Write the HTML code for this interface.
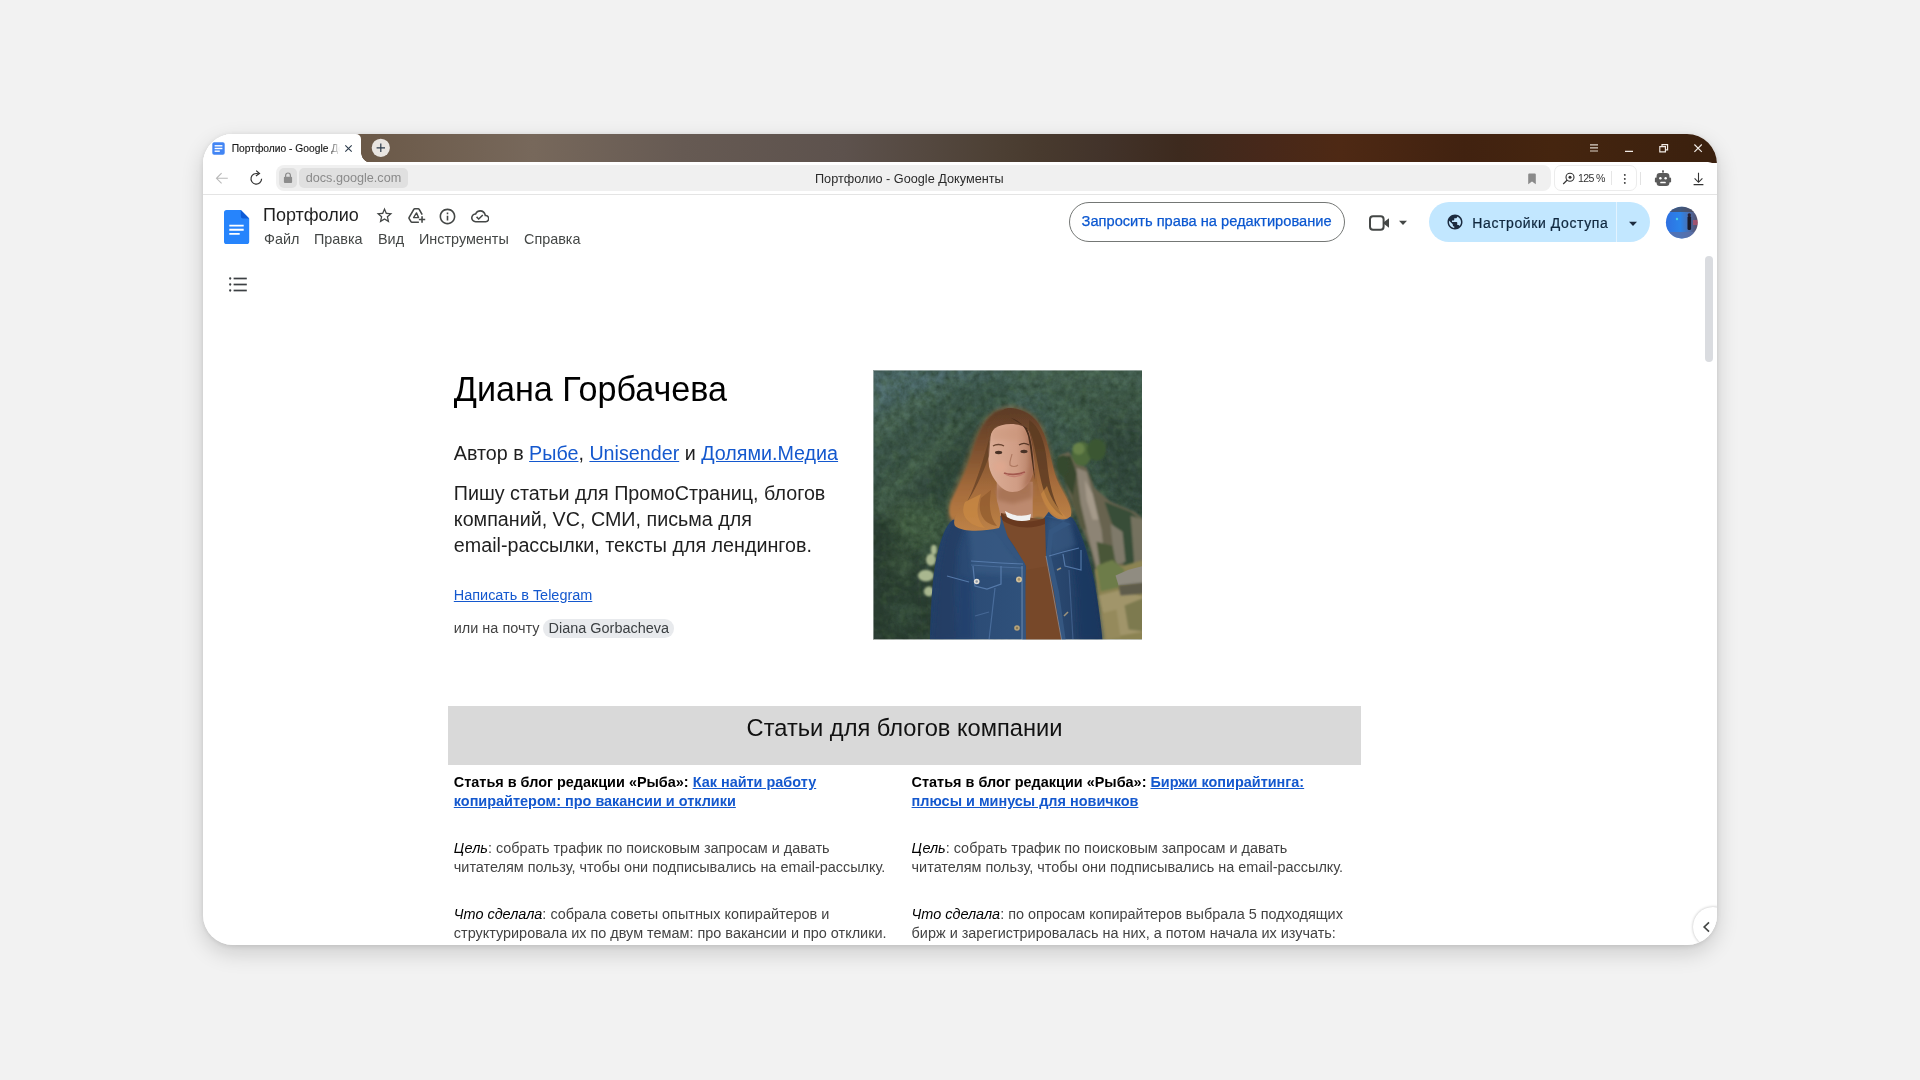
<!DOCTYPE html>
<html lang="ru">
<head>
<meta charset="utf-8">
<title>Портфолио - Google Документы</title>
<style>
*{box-sizing:border-box;margin:0;padding:0}
html,body{width:1920px;height:1080px;overflow:hidden;background:#f2f2f2;font-family:"Liberation Sans",sans-serif;color:#000}
#win{will-change:transform;position:absolute;left:203px;top:134px;width:1514px;height:811px;border-radius:30px;background:#fff;overflow:hidden}
#shadow{position:absolute;left:203px;top:134px;width:1514px;height:811px;border-radius:30px;box-shadow:0 8px 22px rgba(0,0,0,.16),0 1px 5px rgba(0,0,0,.10)}
.abs{position:absolute;white-space:nowrap}
/* tab bar */
#tabbar{position:absolute;left:0;top:0;width:1514px;height:29px;background:linear-gradient(90deg,#fff 0,#fff 120px,#6b5948 120px,#6b5948 0px,#6b5948 160px,#77685b 330px,#665a53 480px,#5d524d 640px,#4c3f33 800px,#483a2e 837px,#42332a 900px,#3d2a1e 977px,#47281a 1060px,#4e2914 1138px,#412210 1262px,#45250f 1351px,#3a200e 1514px)}
#tab{position:absolute;left:0;top:0;width:158.300px;height:29px;background:#fff;border-radius:0 5px 0 0}
#tabcurve{position:absolute;left:158px;top:19px;width:10px;height:10px;background:radial-gradient(circle at 100% 0,rgba(255,255,255,0) 9.5px,#fff 10px)}
#toolbar{position:absolute;left:0;top:28px;width:1514px;height:32px;background:#fff;border-radius:0 9px 0 0}
#tbline{position:absolute;left:0;top:60px;width:1514px;height:1px;background:#e4e4e4}
#addr{position:absolute;left:73px;top:31px;width:1275px;height:26px;background:#f0f0f0;border-radius:8px}
#lock{position:absolute;left:76px;top:34px;width:18px;height:20px;background:#e0e0e0;border-radius:5px}
#url{position:absolute;left:96px;top:34px;width:109px;height:20px;background:#e0e0e0;border-radius:5px}
#zoompill{position:absolute;left:1351px;top:31px;width:83px;height:26px;background:#fff;border:1px solid #ececec;border-radius:7px}
/* docs */
.menu{font-size:14.4px;color:#444746;top:97px}
a,.lnk{color:#1458ce;text-decoration:underline}
.doc11{font-size:14.45px;line-height:19px;color:#434343}
</style>
</head>
<body>
<div id="shadow"></div>
<div id="win">
  <!-- browser chrome -->
  <div id="tabbar"></div>
  <div id="toolbar"></div>
  <div id="tab"></div>
  <div id="tabcurve"></div>
  <div id="tbline"></div>
  <div id="addr"></div>
  <div id="lock"></div>
  <div id="url"></div>
  <div id="zoompill"></div>
  <div class="abs" style="left:28.700px;top:8.600px;font-size:10.250px;color:#1a1a1a;width:108.500px;overflow:hidden;-webkit-mask-image:linear-gradient(90deg,#000 0,#000 96px,rgba(0,0,0,0) 108px);-webkit-text-stroke:0.150px #1a1a1a">Портфолио - Google Документы</div>
  <div class="abs" style="left:102.700px;top:36.800px;font-size:12.650px;color:#8a8a8a">docs.google.com</div>
  <div class="abs" style="left:612px;top:37.800px;font-size:12.700px;color:#2a2a2a">Портфолио - Google Документы</div>
  <div class="abs" style="left:1375px;top:37.600px;font-size:10.600px;letter-spacing:-0.650px;color:#333">125 %</div>

  <!-- docs header -->
  <div class="abs" style="left:60px;top:71px;font-size:18px;color:#1f1f1f">Портфолио</div>
  <div class="abs menu" style="left:61px">Файл</div>
  <div class="abs menu" style="left:111px">Правка</div>
  <div class="abs menu" style="left:175px">Вид</div>
  <div class="abs menu" style="left:216px">Инструменты</div>
  <div class="abs menu" style="left:321px">Справка</div>

  <div class="abs" style="left:866px;top:68px;width:276px;height:40px;border:1px solid #747775;border-radius:20px"></div>
  <div class="abs" style="left:878.600px;top:79.300px;font-size:14.650px;color:#0b57d0;-webkit-text-stroke:0.250px #0b57d0">Запросить права на редактирование</div>
  <div class="abs" style="left:1226px;top:68px;width:221px;height:40px;border-radius:20px;background:#c2e7ff"></div>
  <div class="abs" style="left:1413px;top:68px;width:1px;height:40px;background:#e3f3ff"></div>
  <div class="abs" style="left:1269.300px;top:80.500px;font-size:14px;color:#10283f;letter-spacing:0.600px;-webkit-text-stroke:0.220px #10283f">Настройки Доступа</div>

  <!-- document -->
  <div class="abs" style="left:250.800px;top:236px;font-size:34.150px;color:#000">Диана Горбачева</div>
  <div class="abs" style="left:250.800px;top:308.300px;font-size:19.720px;color:#1f1f1f">Автор в <span class="lnk">Рыбе</span>, <span class="lnk">Unisender</span> и <span class="lnk">Долями.Медиа</span></div>
  <div class="abs" style="left:250.800px;top:345.500px;font-size:19.720px;line-height:26.100px;color:#1f1f1f">Пишу статьи для ПромоСтраниц, блогов<br>компаний, VC, СМИ, письма для<br>email-рассылки, тексты для лендингов.</div>
  <div class="abs" style="left:250.800px;top:453px;font-size:14.450px"><span class="lnk">Написать в Telegram</span></div>
  <div class="abs" style="left:250.800px;top:486.200px;font-size:14.450px;color:#434343">или на почту</div>
  <div class="abs" style="left:340.300px;top:485.300px;width:130.500px;height:18.400px;border-radius:9.200px;background:#e8eaed"></div>
  <div class="abs" style="left:345.600px;top:486.200px;font-size:14.450px;color:#3c4043">Diana Gorbacheva</div>

  <div class="abs" style="left:244.500px;top:571.800px;width:913.500px;height:58.900px;background:#d9d9d9"></div>
  <div class="abs" style="left:543.600px;top:581px;font-size:23.670px;color:#111">Статьи для блогов компании</div>

  <div class="abs doc11" style="left:250.800px;top:639px"><b style="color:#000">Статья в блог редакции «Рыба»: <span class="lnk">Как найти работу</span><br><span class="lnk">копирайтером: про вакансии и отклики</span></b></div>
  <div class="abs doc11" style="left:250.800px;top:705px"><i style="color:#000">Цель</i>: собрать трафик по поисковым запросам и давать<br>читателям пользу, чтобы они подписывались на email-рассылку.</div>
  <div class="abs doc11" style="left:250.800px;top:771px"><i style="color:#000">Что сделала</i>: собрала советы опытных копирайтеров и<br>структурировала их по двум темам: про вакансии и про отклики.</div>

  <div class="abs doc11" style="left:708.600px;top:639px"><b style="color:#000">Статья в блог редакции «Рыба»: <span class="lnk">Биржи копирайтинга:</span><br><span class="lnk">плюсы и минусы для новичков</span></b></div>
  <div class="abs doc11" style="left:708.600px;top:705px"><i style="color:#000">Цель</i>: собрать трафик по поисковым запросам и давать<br>читателям пользу, чтобы они подписывались на email-рассылку.</div>
  <div class="abs doc11" style="left:708.600px;top:771px"><i style="color:#000">Что сделала</i>: по опросам копирайтеров выбрала 5 подходящих<br>бирж и зарегистрировалась на них, а потом начала их изучать:</div>


  <!-- tab favicon -->
  <svg class="abs" style="left:8.5px;top:8px" width="13" height="13" viewBox="0 0 13 13"><rect x="0.3" y="0.3" width="12.4" height="12.4" rx="1.8" fill="#4285f4"/><rect x="2.6" y="3.1" width="7.8" height="1.4" fill="#fff"/><rect x="2.6" y="5.8" width="7.8" height="1.4" fill="#fff"/><rect x="2.6" y="8.5" width="5.2" height="1.4" fill="#fff"/></svg>
  <!-- tab close -->
  <svg class="abs" style="left:141px;top:10px" width="9" height="9" viewBox="0 0 9 9"><path d="M1.3 1.3 7.7 7.7M7.7 1.3 1.3 7.7" stroke="#2b3a4a" stroke-width="1.1" fill="none"/></svg>
  <!-- new tab -->
  <svg class="abs" style="left:168px;top:4px" width="20" height="20" viewBox="0 0 20 20"><circle cx="9.8" cy="9.8" r="9.1" fill="#e9e5e1"/><path d="M9.8 5.6v8.4M5.6 9.8h8.4" stroke="#2b3a4a" stroke-width="1.2" fill="none"/></svg>
  <!-- window controls -->
  <svg class="abs" style="left:1380px;top:6px" width="130" height="16" viewBox="0 0 130 16"><g stroke="#f1ebe6" stroke-width="1.150" fill="none"><path d="M7 4.800h8M7 7.900h8M7 11h8" stroke="#ddd3ca"/><path d="M42 11.4h8"/><path d="M76.8 6.6h5.6v5.2h-5.6zM79 6.4V4.6h5.6v5.2h-2"/><path d="M111.4 4.5l7.4 7.4M118.8 4.5l-7.4 7.4"/></g></svg>
  <!-- back -->
  <svg class="abs" style="left:12px;top:37px" width="14" height="14" viewBox="0 0 14 14"><path d="M12.8 7.3H1.6M6.6 2.2 1.5 7.3l5.1 5.1" stroke="#b9b9b9" stroke-width="1.1" fill="none"/></svg>
  <!-- reload -->
  <svg class="abs" style="left:45px;top:35px" width="17" height="18" viewBox="0 0 17 18"><path d="M13.6 9.8a5.3 5.3 0 1 1-3.3-4.9" stroke="#333" stroke-width="1.2" fill="none"/><path d="M8.2 1.6l3.3 2.9-3.6 2.4" stroke="#333" stroke-width="1.2" fill="none"/></svg>
  <!-- lock -->
  <svg class="abs" style="left:80px;top:38px" width="10" height="12" viewBox="0 0 10 12"><path d="M2.6 5V3.4a2.4 2.4 0 0 1 4.8 0V5" stroke="#8c8c8c" stroke-width="1.2" fill="none"/><rect x="0.9" y="4.8" width="8.2" height="6.2" rx="1" fill="#8c8c8c"/></svg>
  <!-- bookmark -->
  <svg class="abs" style="left:1324px;top:38.5px" width="10" height="12" viewBox="0 0 10 12"><path d="M1.2 1.6a1 1 0 0 1 1-1h5.6a1 1 0 0 1 1 1v9.6L5 8.6l-3.8 2.6z" fill="#8a8a8a"/></svg>
  <!-- zoom magnifier -->
  <svg class="abs" style="left:1359px;top:38px" width="14" height="13" viewBox="0 0 14 13"><circle cx="8" cy="5.2" r="4" stroke="#333" stroke-width="1.1" fill="none"/><path d="M5 8.3 1.2 12" stroke="#333" stroke-width="1.2"/><circle cx="8" cy="5.2" r="1.5" fill="#333"/></svg>
  <div class="abs" style="left:1408px;top:37px;width:1px;height:14px;background:#e6e6e6"></div>
  <svg class="abs" style="left:1419px;top:39px" width="6" height="12" viewBox="0 0 6 12"><circle cx="2.8" cy="1.9" r="0.95" fill="#333"/><circle cx="2.8" cy="5.9" r="0.95" fill="#333"/><circle cx="2.8" cy="9.9" r="0.95" fill="#333"/></svg>
  <div class="abs" style="left:1437px;top:38px;width:1px;height:13px;background:#e2e2e2"></div>
  <!-- robot -->
  <svg class="abs" style="left:1451px;top:36px" width="18" height="17" viewBox="0 0 18 17"><path d="M9 0.6v2.6" stroke="#5a5a5a" stroke-width="1.1"/><circle cx="9" cy="1.2" r="0.9" fill="#5a5a5a"/><rect x="2.6" y="3" width="12.8" height="13" rx="3.2" fill="#5a5a5a"/><rect x="0.9" y="7.6" width="2.6" height="4.8" rx="1.2" fill="#5a5a5a"/><rect x="14.5" y="7.6" width="2.6" height="4.8" rx="1.2" fill="#5a5a5a"/><circle cx="6.4" cy="8.3" r="1.25" fill="#fff"/><circle cx="11.6" cy="8.3" r="1.25" fill="#fff"/><rect x="6.2" y="11.8" width="5.6" height="1.5" rx="0.6" fill="#fff"/></svg>
  <!-- download -->
  <svg class="abs" style="left:1489px;top:38px" width="13" height="14" viewBox="0 0 13 14"><path d="M6.5 0.8v9.4M2.6 6.4l3.9 3.9 3.9-3.9M1.6 12.6h9.8" stroke="#333" stroke-width="1.1" fill="none"/></svg>

  <!-- docs icon -->
  <svg class="abs" style="left:20px;top:75px" width="27" height="36" viewBox="0 0 27 36"><path d="M3.6 1h14.2l8.4 8.4v23a2.6 2.6 0 0 1-2.6 2.6H3.6A2.6 2.6 0 0 1 1 32.400V3.600A2.600 2.600 0 0 1 3.600 1z" fill="#2684fc"/><path d="M17.800 1l8.400 8.400h-6.200a2.200 2.200 0 0 1-2.200-2.200z" fill="#0d5bd7"/><path d="M6.300 15.700h14.400v1.900H6.300zM6.300 19.800h14.400v1.900H6.300zM6.300 23.900h10.400v1.900H6.300z" fill="#fff"/></svg>
  <!-- star -->
  <svg class="abs" style="left:172.200px;top:71.600px" width="19" height="19" viewBox="0 0 24 24"><path fill="#444746" d="M22 9.240l-7.190-.62L12 2 9.190 8.630 2 9.240l5.460 4.730L5.820 21 12 17.270 18.180 21l-1.630-7.030L22 9.240zM12 15.400l-3.760 2.270 1-4.280-3.320-2.880 4.380-.38L12 6.100l1.710 4.040 4.380.38-3.320 2.880 1 4.280L12 15.400z"/></svg>
  <!-- drive add -->
  <svg class="abs" style="left:204px;top:72.300px" width="19" height="19" viewBox="0 0 24 24"><g fill="none" stroke="#444746" stroke-width="2" stroke-linejoin="round"><path d="M15 20.500H6.300a1.500 1.500 0 0 1-1.300-.75L2.700 15.900a1.500 1.500 0 0 1 0-1.500L8.600 4.250a1.500 1.500 0 0 1 1.300-.75h4.200a1.500 1.500 0 0 1 1.300.75L19.200 10.800"/><path d="M12 8.700 8.300 14.700H14.600z" stroke-width="1.700"/><path d="M19 13v8M15 17h8" stroke-linejoin="miter"/></g></svg>
  <!-- info -->
  <svg class="abs" style="left:235.400px;top:72.800px" width="19" height="19" viewBox="0 0 24 24"><path fill="#444746" d="M11 7h2v2h-2zm0 4h2v6h-2zm1-9C6.480 2 2 6.480 2 12s4.480 10 10 10 10-4.480 10-10S17.520 2 12 2zm0 18c-4.410 0-8-3.590-8-8s3.590-8 8-8 8 3.590 8 8-3.590 8-8 8z"/></svg>
  <!-- cloud done -->
  <svg class="abs" style="left:267.500px;top:72.800px" width="18.500" height="18.500" viewBox="0 0 24 24"><path fill="#444746" d="M19.350 10.040C18.670 6.590 15.640 4 12 4 9.110 4 6.600 5.640 5.350 8.040 2.340 8.360 0 10.910 0 14c0 3.310 2.690 6 6 6h13c2.760 0 5-2.240 5-5 0-2.640-2.050-4.780-4.650-4.960zM19 18H6c-2.210 0-4-1.790-4-4 0-2.050 1.530-3.760 3.560-3.970l1.070-.11.500-.95C8.080 7.140 9.940 6 12 6c2.620 0 4.880 1.860 5.390 4.430l.3 1.500 1.530.11c1.560.1 2.780 1.410 2.780 2.960 0 1.650-1.350 3-3 3zm-9-3.820l-2.090-2.090L6.500 13.500 10 17l6.010-6.010-1.410-1.410z"/></svg>
  <!-- outline list -->
  <svg class="abs" style="left:25px;top:142px" width="20" height="17" viewBox="0 0 20 17"><g fill="#3c4043"><circle cx="2.200" cy="2.500" r="1.150"/><circle cx="2.200" cy="8.500" r="1.150"/><circle cx="2.200" cy="14.500" r="1.150"/><rect x="5.600" y="1.650" width="13.200" height="1.700"/><rect x="5.600" y="7.650" width="13.200" height="1.700"/><rect x="5.600" y="13.650" width="13.200" height="1.700"/></g></svg>
  <!-- camera -->
  <svg class="abs" style="left:1165px;top:80px" width="23" height="18" viewBox="0 0 23 18"><rect x="2" y="2.300" width="13.600" height="13.400" rx="3" stroke="#444746" stroke-width="2" fill="none"/><path d="M15.400 8.600l5.600-4.400v9.600l-5.600-4.400z" fill="#444746"/></svg>
  <svg class="abs" style="left:1195px;top:86px" width="10" height="6" viewBox="0 0 10 6"><path d="M1 0.800h8L5 5z" fill="#444746"/></svg>
  <!-- globe -->
  <svg class="abs" style="left:1243.300px;top:79px" width="18" height="18" viewBox="0 0 24 24"><path fill="#1c2b3f" d="M12 2C6.480 2 2 6.480 2 12s4.480 10 10 10 10-4.480 10-10S17.520 2 12 2zm-1 17.930c-3.950-.49-7-3.850-7-7.930 0-.62.080-1.210.21-1.790L9 15v1c0 1.100.9 2 2 2v1.930zm6.900-2.540c-.26-.81-1-1.390-1.900-1.390h-1v-3c0-.55-.45-1-1-1H8v-2h2c.55 0 1-.45 1-1V7h2c1.100 0 2-.9 2-2v-.41c2.930 1.190 5 4.060 5 7.410 0 2.080-.8 3.970-2.100 5.390z"/></svg>
  <svg class="abs" style="left:1425px;top:86.500px" width="10" height="6" viewBox="0 0 10 6"><path d="M1 0.800h8L5 5z" fill="#1c2b3f"/></svg>
  <!-- avatar -->
  <svg class="abs" style="left:1462px;top:72px" width="34" height="34" viewBox="0 0 34 34"><defs><linearGradient id="avg" x1="0" y1="0" x2="1" y2="0"><stop offset="0" stop-color="#2f6fe0"/><stop offset="0.450" stop-color="#2b84ea"/><stop offset="0.700" stop-color="#4a6fb0"/><stop offset="1" stop-color="#5a4a5a"/></linearGradient><clipPath id="avc"><circle cx="16.800" cy="16.600" r="15.900"/></clipPath></defs><g clip-path="url(#avc)"><rect width="34" height="34" fill="url(#avg)"/><rect x="0" y="0" width="34" height="6" fill="#4a4650" opacity=".7"/><rect x="0" y="26" width="34" height="8" fill="#5a6fa8" opacity=".8"/><rect x="22.500" y="10" width="3.600" height="14" rx="1.500" fill="#1a1a2a"/><circle cx="24.300" cy="9" r="1.700" fill="#2a2030"/><rect x="28" y="14" width="6" height="5" fill="#c0506a" opacity=".7"/><circle cx="12" cy="13" r="1.200" fill="#4ad0e0"/></g></svg>
  <!-- scrollbar -->
  <div class="abs" style="left:1502px;top:122px;width:8px;height:106px;border-radius:4px;background:#dadce0"></div>
  <!-- side panel toggle -->
  <div class="abs" style="left:1490px;top:773px;width:40px;height:40px;border-radius:20px;background:#fff;box-shadow:0 0 3px rgba(0,0,0,.28)"></div>
  <svg class="abs" style="left:1499px;top:787px" width="9" height="12" viewBox="0 0 9 12"><path d="M7 1.400 2.200 6 7 10.600" stroke="#444746" stroke-width="1.700" fill="none"/></svg>

  <!-- photo placeholder -->
<svg id="photo" class="abs" style="left:669.500px;top:236.300px" width="269.500" height="269.500" viewBox="0 0 270 270" preserveAspectRatio="none">
<defs>
<linearGradient id="pbg" x1="0" y1="0" x2="0" y2="1"><stop offset="0" stop-color="#4a6964"/><stop offset="0.300" stop-color="#3b5848"/><stop offset="0.650" stop-color="#334d3b"/><stop offset="1" stop-color="#27382b"/></linearGradient>
<linearGradient id="phair" x1="0" y1="0" x2="0" y2="1"><stop offset="0" stop-color="#5c3b26"/><stop offset="0.300" stop-color="#7a4e2e"/><stop offset="0.650" stop-color="#a46b3b"/><stop offset="1" stop-color="#bd8146"/></linearGradient>
<linearGradient id="pjack" x1="0" y1="0" x2="1" y2="0"><stop offset="0" stop-color="#233f66"/><stop offset="0.250" stop-color="#2c4c76"/><stop offset="0.550" stop-color="#2f517b"/><stop offset="0.800" stop-color="#27446b"/><stop offset="1" stop-color="#1c3457"/></linearGradient>
<linearGradient id="pface" x1="0" y1="0" x2="1" y2="0"><stop offset="0" stop-color="#dcae97"/><stop offset="0.600" stop-color="#d09d85"/><stop offset="1" stop-color="#b27c62"/></linearGradient>
<filter id="b8" x="-20%" y="-20%" width="140%" height="140%"><feGaussianBlur stdDeviation="8"/></filter>
<filter id="b4" x="-20%" y="-20%" width="140%" height="140%"><feGaussianBlur stdDeviation="4"/></filter>
<filter id="b2" x="-20%" y="-20%" width="140%" height="140%"><feGaussianBlur stdDeviation="2"/></filter>
<filter id="b1" x="-20%" y="-20%" width="140%" height="140%"><feGaussianBlur stdDeviation="1"/></filter>
<filter id="b05" x="-20%" y="-20%" width="140%" height="140%"><feGaussianBlur stdDeviation="0.600"/></filter>
<filter id="tex" x="0" y="0" width="100%" height="100%" color-interpolation-filters="sRGB"><feTurbulence type="fractalNoise" baseFrequency="0.140" numOctaves="3" seed="7" result="n"/><feColorMatrix in="n" type="matrix" values="0 0 0 0 0.120  0 0 0 0 0.200  0 0 0 0 0.130  0.900 0.900 0.300 0 -0.750"/></filter>
<filter id="tex2" x="0" y="0" width="100%" height="100%" color-interpolation-filters="sRGB"><feTurbulence type="fractalNoise" baseFrequency="0.110" numOctaves="3" seed="3" result="n"/><feColorMatrix in="n" type="matrix" values="0 0 0 0 0.400  0 0 0 0 0.540  0 0 0 0 0.360  0.300 0.900 0.900 0 -0.950"/></filter>
<clipPath id="pclip"><rect x="0" y="0" width="270" height="270"/></clipPath>
</defs>
<g clip-path="url(#pclip)">
<rect width="270" height="270" fill="url(#pbg)"/>
<!-- forest masses -->
<g filter="url(#b8)">
<path d="M-10-10H150L70 14 0 50-10 56z" fill="#557679"/>
<path d="M130-10H280V22L200 16 140 22z" fill="#4b6b58"/>
<path d="M-10 52 40 24 120 8 150 24 100 56 50 92 0 128-10 130z" fill="#3a5949"/>
<path d="M-10 132 20 104 60 76 100 50 128 60 100 110 78 150 40 172-10 182z" fill="#30493a"/>
<path d="M150 14H280V64L230 54 190 34z" fill="#3f5d49"/>
<path d="M215 44 280 54V150L250 135 225 100z" fill="#2e4537"/>
<path d="M-10 140 30 150 55 190 60 280H-10z" fill="#243427"/>
<path d="M20 135 75 135 70 175 40 178 22 160z" fill="#45633f"/>
<path d="M160 26 215 30 225 62 195 78 170 62z" fill="#39564200"/>
</g>
<g filter="url(#b4)" opacity="0.700">
<path d="M0 52 36 30 92 8 60 32 20 60 0 74z" fill="#5a7a66"/>
<path d="M0 126 30 98 66 66 100 40 84 66 52 100 24 130 0 150z" fill="#4f7052"/>
<path d="M60 110 84 80 96 84 76 120 66 146z" fill="#27402f"/>
<path d="M170 30 210 40 230 70 214 66 190 50z" fill="#4a6a4e"/>
<path d="M10 190 30 176 44 196 30 214z" fill="#3c573a"/>
<path d="M14 236 36 226 46 250 24 262z" fill="#34503a"/>
</g>
<rect width="270" height="270" fill="#52646a" opacity="0.220"/>
<rect width="270" height="270" filter="url(#tex)" opacity="0.700"/>
<rect width="270" height="270" filter="url(#tex2)" opacity="0.400"/>
<!-- rock -->
<g filter="url(#b1)">
<path d="M186 86 196 82 205 92 214 98 222 118 238 132 262 142 272 150V206H224L218 180 210 160 202 140 194 118 188 100z" fill="#67644f"/>
<path d="M204 98 214 102 221 128 229 160 233 198 224 198 214 160 206 130z" fill="#8d8475"/>
<path d="M212 110 220 124 226 150 220 150 214 130z" fill="#a59a8a"/>
<path d="M196 100 204 104 208 134 214 160 208 158 200 134z" fill="#56583f"/>
<path d="M232 132 258 142 270 152V196L252 200 246 170 238 150z" fill="#394d38"/>
<path d="M238 154 250 162 253 192 242 196z" fill="#7f7a6a"/>
<path d="M184 88 198 86 204 104 200 126 192 112z" fill="#37472f"/>
<path d="M258 146 272 150V200L262 198z" fill="#74725f"/>
<path d="M224 172 240 176 244 198 228 200z" fill="#4a5638"/>
</g>
<!-- tree on rock -->
<g filter="url(#b1)">
<ellipse cx="209" cy="84" rx="10" ry="12" fill="#4d693b"/>
<ellipse cx="224" cy="80" rx="9.500" ry="11" fill="#3b5632"/>
<ellipse cx="206" cy="79" rx="6" ry="6" fill="#67824a"/>
<ellipse cx="190" cy="96" rx="6" ry="10" fill="#34482f"/>
</g>
<!-- grass -->
<g filter="url(#b1)">
<path d="M222 200 234 192 250 196 272 190V272H228z" fill="#8b8352"/>
<path d="M224 196 240 190 252 200 246 218 228 222z" fill="#6d7c48"/>
<path d="M226 226 250 220 272 228V262L236 268z" fill="#a1956a"/>
<path d="M252 236 272 228V262L256 260z" fill="#7d7a50"/>
<path d="M228 244 244 240 248 268 232 270z" fill="#958a5c"/>
</g>
<path d="M243 206 256 200 272 196V214L262 215 246 216z" fill="#908c81" filter="url(#b05)"/>
<path d="M246 216 272 213V224L248 226z" fill="#5f5c4c" filter="url(#b1)"/>
<!-- light foliage left of arm -->
<g filter="url(#b1)" fill="#a9b78f">
<ellipse cx="58" cy="190" rx="5" ry="6"/><ellipse cx="53" cy="206" rx="8" ry="6"/><ellipse cx="56" cy="222" rx="5" ry="5"/><ellipse cx="61" cy="180" rx="3" ry="5"/>
</g>
<!-- hair back -->
<path d="M134 36C152 35 166 46 172 62 178 78 180 94 186 110 192 124 200 132 200 144 198 154 186 156 176 152L128 160C112 166 92 164 82 158 72 150 74 136 80 122 88 104 94 88 100 72 106 54 118 38 134 36z" fill="#a8794a" opacity="0.450" filter="url(#b2)"/>
<g filter="url(#b1)">
<path d="M134 39C150 38 163 46 168 58 175 72 177 88 182 104 187 118 197 128 198 140 198 150 190 153 182 152 172 150 164 144 160 150L128 158C118 163 100 162 88 158 78 154 74 144 78 132 84 118 92 104 98 86 103 68 110 50 122 42 126 40 130 39 134 39z" fill="url(#phair)"/>
</g>
<!-- neck -->
<path d="M124 112H160V150H124z" fill="#bd8a6f"/>
<path d="M124 118 160 112V128L140 134 124 130z" fill="#a97457" filter="url(#b2)"/>
<!-- jacket -->
<path d="M128 146 80 150C72 156 68 170 64 186 60 204 58 230 57 272H230C228 250 224 222 220 204 214 180 208 160 200 148L176 142 170 150 130 156z" fill="url(#pjack)"/>
<!-- jacket shading -->
<g filter="url(#b2)">
<path d="M80 150 72 168 66 200 60 270 84 270 82 220 84 180 92 156z" fill="#213c63" opacity="0.700"/>
<path d="M200 150 212 178 222 215 230 270 206 270 204 220 200 190z" fill="#1c3760" opacity="0.800"/>
<path d="M96 158 128 160 134 176 150 196 150 206 100 204z" fill="#3b5f8a" opacity="0.500"/>
<path d="M176 150 196 150 204 176 180 186 174 170z" fill="#3b5f8a" opacity="0.500"/>
<path d="M86 208 98 212 100 270 84 270z" fill="#1f3d6b" opacity="0.600"/>
</g>
<!-- shirt -->
<path d="M128 143 172 150 173 186 181 222 189 272H151L152 232 153 196 141 176 130 160z" fill="#7b4b2c"/>
<path d="M128 143C138 152 158 154 172 148L172 154C158 160 138 158 128 149z" fill="#69391f"/>
<path d="M153 200 176 196 189 272H151z" fill="#744628" opacity="0.600"/>
<!-- collar white -->
<path d="M132 141C140 146 150 147 158 144L157 150C149 152 140 151 134 147z" fill="#f1f1f1"/>
<!-- lapels -->
<path d="M128 146 135 168 152 194 153 272H149L149 196 130 172 118 158z" fill="#34557f"/>
<path d="M172 146 196 148 176 160 173 186 181 222 189 272H193L186 222 178 186 180 164 198 154z" fill="#355781"/>
<path d="M149 196V272" stroke="#9fb6d2" stroke-width="0.800" opacity="0.700"/>
<path d="M173 186 189 272" stroke="#9fb6d2" stroke-width="0.800" opacity="0.600"/>
<!-- pockets / seams -->
<g stroke="#5d82b3" stroke-width="1.200" fill="none" opacity="0.850">
<path d="M98 191 128 193 150 194"/><path d="M98 195 128 197 150 198" opacity="0.600"/>
<path d="M100 196 102 216 114 219 128 214 128 196"/>
<path d="M176 186 190 182 206 178"/><path d="M190 184 192 196 208 200 208 180"/>
<path d="M74 206 96 212"/><path d="M122 218 116 270" opacity="0.700"/><path d="M196 200 200 270" opacity="0.500"/>
<path d="M102 246 116 242" opacity="0.600"/><path d="M184 200 188 198" stroke="#b0a080" stroke-width="1.600"/><path d="M191 246 195 242" stroke="#b0a080" stroke-width="1.600"/>
</g>
<!-- buttons -->
<circle cx="103.700" cy="211.500" r="2.800" fill="#e4e0d8"/><circle cx="103.700" cy="211.500" r="1.200" fill="#8d97a6"/>
<circle cx="146" cy="209.400" r="3" fill="#d2bf98"/><circle cx="146" cy="209.400" r="1.300" fill="#a38f68"/>
<circle cx="144" cy="258" r="2.800" fill="#b5a27a"/><circle cx="144" cy="258" r="1.200" fill="#8a7852"/>
<!-- face -->
<path d="M116 72C116 60 124 54 138 54 152 54 162 62 162.500 78 163 90 162 102 157 111 152 119 146 122 139.500 122 132 122 125.500 116 120 107 115 98 113.500 86 116 72z" fill="url(#pface)"/>
<g filter="url(#b2)">
<path d="M150 60 164 66 165 96 158 112 150 120 156 96 156 76z" fill="#a3694c" opacity="0.650"/>
<ellipse cx="127" cy="97" rx="7" ry="6" fill="#e1a88f" opacity="0.700"/>
<path d="M118 58H160V70H118z" fill="#c99276" opacity="0.400"/>
</g>
<!-- facial features -->
<g filter="url(#b05)">
<path d="M120 76C123 74 128 74 131 76" stroke="#6a4430" stroke-width="1.300" fill="none"/>
<path d="M146 75C149 73 153 73 156 75" stroke="#5a3828" stroke-width="1.300" fill="none"/>
<ellipse cx="125.600" cy="82.500" rx="3.600" ry="1.700" fill="#4a3226"/>
<ellipse cx="151" cy="81.500" rx="3.600" ry="1.700" fill="#4a3226"/>
<path d="M139 84C138 89 136 92 137 95 139 97 143 97 145 95" stroke="#b07a62" stroke-width="1.200" fill="none"/>
<path d="M131 103C135 105 146 105 152 102" stroke="#a3584e" stroke-width="1.800" fill="none"/>
<path d="M133 104.500C138 107.500 146 107 151 103.500" stroke="#c47e70" stroke-width="1.400" fill="none"/>
</g>
<!-- hair front strands -->
<g filter="url(#b05)">
<path d="M135 38C126 40 118 50 114 66 110 84 104 104 96 122 88 140 78 148 82 156 90 162 108 162 126 158 130 150 126 138 122 124 116 108 114 90 116 72 118 58 126 50 138 50z" fill="url(#phair)"/>
<path d="M138 50C146 50 152 54 156 62 160 74 161 90 163 104 165 120 170 134 176 142 182 150 192 152 198 146 200 136 190 124 184 110 178 94 176 72 168 58 162 46 150 38 135 38z" fill="url(#phair)"/>
<path d="M138 48C146 50 152 56 155 66 158 80 159 96 162 110 160 90 160 72 154 58z" fill="#4a2e1c"/>
<path d="M156 60C162 70 164 96 170 118 174 132 182 142 190 146 180 132 176 112 174 92 172 72 166 56 156 50z" fill="#5a3922" opacity="0.800"/>
<path d="M118 62C112 84 104 112 94 132 100 124 110 104 116 86z" fill="#5f3d24" opacity="0.700"/>
<path d="M92 132C86 146 96 156 112 158 104 150 102 140 108 124z" fill="#c98a44" opacity="0.750"/>
<path d="M168 124C172 138 182 150 194 148 186 140 178 130 174 116z" fill="#c98a44" opacity="0.650"/>
<path d="M108 128C104 142 110 154 124 156 116 146 116 134 118 120z" fill="#8f5a2c" opacity="0.700"/>
</g>
</g>
<rect x="0.500" y="0.500" width="269" height="269" fill="none" stroke="#d8dcda" stroke-opacity="0.500" stroke-width="1"/>
</svg>
</div>
</body>
</html>
